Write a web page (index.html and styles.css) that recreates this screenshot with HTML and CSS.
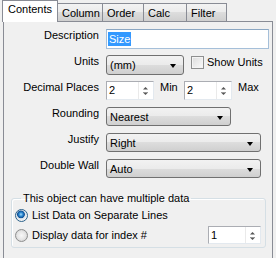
FILE: index.html
```html
<!DOCTYPE html>
<html lang="en">
<head>
    <meta charset="UTF-8">
    <title>Properties</title>
    <link rel="stylesheet" href="styles.css">
</head>
<body>
    <div class="tabs">
        <div class="tab tab-active tab-contents">Contents</div>
        <div class="tab tab-column">Column</div>
        <div class="tab tab-order">Order</div>
        <div class="tab tab-calc">Calc</div>
        <div class="tab tab-filter">Filter</div>
    </div>
    <div class="page">
        <div class="form">
            <div class="row">
                <label class="lbl">Description</label>
                <div class="textbox desc-box"><span class="sel">Size</span></div>
            </div>
            <div class="row">
                <label class="lbl">Units</label>
                <div class="combo units-combo">(mm)</div>
                <div class="check-wrap">
                    <span class="checkbox"></span>
                    <span>Show Units</span>
                </div>
            </div>
            <div class="row">
                <label class="lbl">Decimal Places</label>
                <div class="spin">
                    <span class="spin-val">2</span>
                    <span class="spin-btns">
                        <svg width="7" height="11" viewBox="0 0 7 11"><path d="M1 4.5h5L3.5 2z" fill="#555"/><path d="M1 7.5h5" stroke="#999" stroke-width="1"/><path d="M1.5 8h4L3.5 10z" fill="#555"/></svg>
                    </span>
                </div>
                <span class="mini-lbl">Min</span>
                <div class="spin">
                    <span class="spin-val">2</span>
                    <span class="spin-btns">
                        <svg width="7" height="11" viewBox="0 0 7 11"><path d="M1 4.5h5L3.5 2z" fill="#555"/><path d="M1 7.5h5" stroke="#999" stroke-width="1"/><path d="M1.5 8h4L3.5 10z" fill="#555"/></svg>
                    </span>
                </div>
                <span class="mini-lbl">Max</span>
            </div>
            <div class="row">
                <label class="lbl">Rounding</label>
                <div class="combo rounding-combo">Nearest</div>
            </div>
            <div class="row">
                <label class="lbl">Justify</label>
                <div class="combo long-combo">Right</div>
            </div>
            <div class="row">
                <label class="lbl">Double Wall</label>
                <div class="combo long-combo">Auto</div>
            </div>
        </div>

        <fieldset class="group">
            <legend>This object can have multiple data</legend>
            <div class="opt">
                <span class="radio radio-on"></span>
                <span>List Data on Separate Lines</span>
            </div>
            <div class="opt">
                <span class="radio"></span>
                <span>Display data for index #</span>
                <div class="spin index-spin">
                    <span class="spin-val">1</span>
                    <span class="spin-btns">
                        <svg width="7" height="11" viewBox="0 0 7 11"><path d="M1 4.5h5L3.5 2z" fill="#555"/><path d="M1 7.5h5" stroke="#999" stroke-width="1"/><path d="M1.5 8h4L3.5 10z" fill="#555"/></svg>
                    </span>
                </div>
            </div>
        </fieldset>
    </div>
</body>
</html>
```

FILE: styles.css
```css
* {
    margin: 0;
    padding: 0;
    box-sizing: border-box;
}
body {
    background: #f0f0f0;
    font-family: "Liberation Sans", Arial, sans-serif;
    font-size: 11px;
    line-height: 13px;
    color: #000;
    overflow: hidden;
    height: 258px;
}

/* tab strip */
.tabs {
    display: flex;
    align-items: flex-end;
    height: 21px;
    padding-left: 2px;
}
.tab {
    height: 18px;
    border: 1px solid #898c95;
    border-bottom: 0;
    margin-left: -1px;
    padding: 3px 0 0 4px;
    background: linear-gradient(#f3f3f3, #ebebeb 50%, #dddddd 50%, #cfcfcf);
}
.tab-active {
    position: relative;
    z-index: 1;
    height: 22px;
    margin-bottom: -1px;
    margin-left: 0;
    padding: 2px 0 0 5px;
    background: #fff;
}
.tab-contents { width: 56px; }
.tab-column { width: 46px; }
.tab-order { width: 42px; }
.tab-calc { width: 44px; }
.tab-filter { width: 41px; }

.page {
    margin-left: 3px;
    width: 270px;
    height: 245px;
    border: 1px solid #898c95;
    background: #f0f0f0;
}

/* form rows */
.form {
    display: flex;
    flex-direction: column;
    gap: 6px;
    padding-top: 7px;
}
.row {
    display: flex;
    height: 20px;
}
.lbl {
    width: 95px;
    margin-right: 7px;
    text-align: right;
}
.textbox {
    height: 20px;
    border: 1px solid #a5bfd9;
    border-top-color: #8aa6c2;
    background: #fff;
    padding: 2px 0 0 1px;
}
.desc-box { width: 163px; }
.sel {
    display: inline-block;
    background: #3399ff;
    color: #fff;
    line-height: 14px;
    padding: 0 1px;
}

.combo {
    position: relative;
    height: 20px;
    border: 1px solid #707070;
    border-radius: 3px;
    padding: 3px 0 0 3px;
    background: linear-gradient(#f2f2f2, #ebebeb 50%, #dddddd 50%, #cfcfcf);
}
.combo::after {
    content: "";
    position: absolute;
    right: 7px;
    top: 8px;
    border-left: 3.5px solid transparent;
    border-right: 3.5px solid transparent;
    border-top: 4px solid #000;
}
.units-combo { width: 78px; }
.rounding-combo { width: 125px; height: 19px; }
.long-combo { width: 155px; height: 19px; }

.check-wrap {
    display: flex;
    gap: 3px;
    margin: 1px 0 0 7px;
}
.checkbox {
    width: 13px;
    height: 13px;
    border: 1px solid #8e8f8f;
    background: linear-gradient(135deg, #dcdcdc, #fbfbfb);
    box-shadow: inset 0 0 0 1px #f4f4f4;
}

/* spinners */
.spin {
    display: flex;
    width: 48px;
    height: 19px;
    border: 1px solid #abadb3;
    border-right-color: #e3e9ef;
    border-bottom-color: #e3e9ef;
    background: #fff;
}
.spin-val {
    flex: 1;
    padding: 2px 0 0 2px;
}
.spin-btns {
    display: flex;
    align-items: center;
    justify-content: center;
    width: 14px;
    border-left: 1px solid #eaeaea;
    margin-right: 1px;
}
.mini-lbl {
    width: 24px;
    margin-left: 6px;
}

/* group box */
.group {
    margin: 13px 6px 0 7px;
    border: 1px solid #d5dfe5;
    border-radius: 3px;
    padding: 0 4px 2px 3px;
    box-shadow: inset 1px 1px 0 #fff;
}
.group legend {
    margin-left: 6px;
    padding: 0 2px;
}
.opt {
    display: flex;
    align-items: center;
    gap: 4px;
    height: 20px;
}
.radio {
    width: 13px;
    height: 13px;
    border-radius: 50%;
    border: 1px solid #8e8f8f;
    background: radial-gradient(circle at 50% 50%, #f8f8f8 0, #e6e6e6 4px, #d4d4d4 6px);
}
.radio-on {
    border-color: #2c628b;
    background: radial-gradient(circle at 45% 40%, #a6dcfb 0, #2a86cf 2px, #0e4f93 3.5px, #d9e2ea 4.2px, #f2f2f2 6px);
}
.index-spin {
    width: 53px;
    height: 18px;
    margin-left: auto;
}
```
